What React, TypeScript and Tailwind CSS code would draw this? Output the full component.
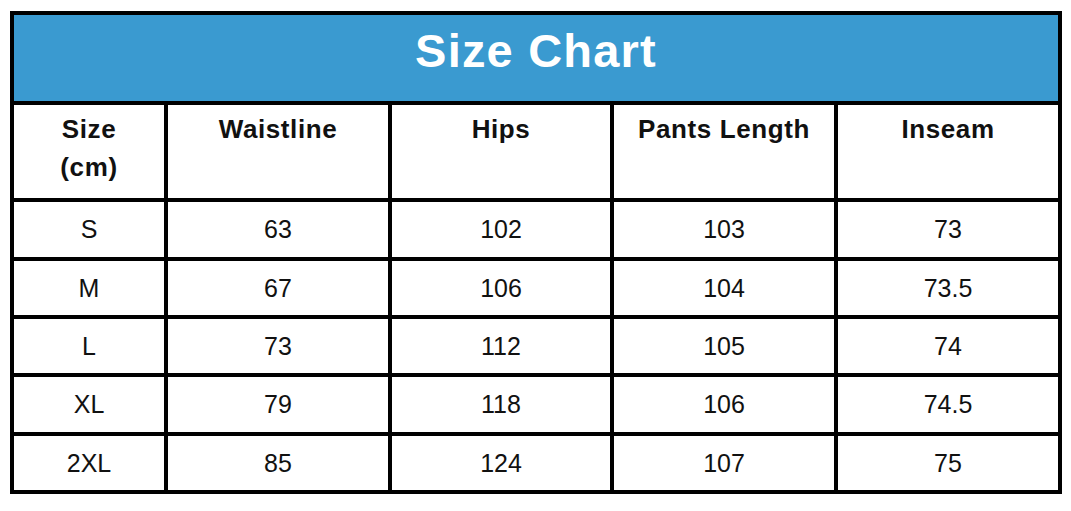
const headers = ["Size\n(cm)", "Waistline", "Hips", "Pants Length", "Inseam"]

const rows = [
    ["S", "63", "102", "103", "73"],
    ["M", "67", "106", "104", "73.5"],
    ["L", "73", "112", "105", "74"],
    ["XL", "79", "118", "106", "74.5"],
    ["2XL", "85", "124", "107", "75"],
]

export default function App() {
    return (
        <div className="min-h-screen bg-white pl-[10px] pt-[11px]" style={{ fontFamily: '"Liberation Sans", Arial, sans-serif' }}>
            <div className="grid w-[1052px] grid-cols-[150px_220px_218px_220px_220px] grid-rows-[86px_93px_55px_54px_54px_55px_54px] gap-[4px] bg-black p-[4px]">
                <div className="col-span-5 flex items-center justify-center bg-[#3a9ad0] pb-[15px]">
                    <h1 className="text-[47px] leading-none font-bold tracking-[1.2px] text-white">Size Chart</h1>
                </div>
                {headers.map(h => (
                    <div key={h} className="bg-white pt-[5px] text-center">
                        <span className="text-[26px] leading-[38px] font-bold tracking-[0.6px] whitespace-pre-line text-[#111]">{h}</span>
                    </div>
                ))}
                {rows.map(row => row.map((cell, i) => (
                    <div key={row[0] + i} className="flex items-center justify-center bg-white text-[25px] leading-none text-[#111]">
                        {cell}
                    </div>
                )))}
            </div>
        </div>
    )
}
